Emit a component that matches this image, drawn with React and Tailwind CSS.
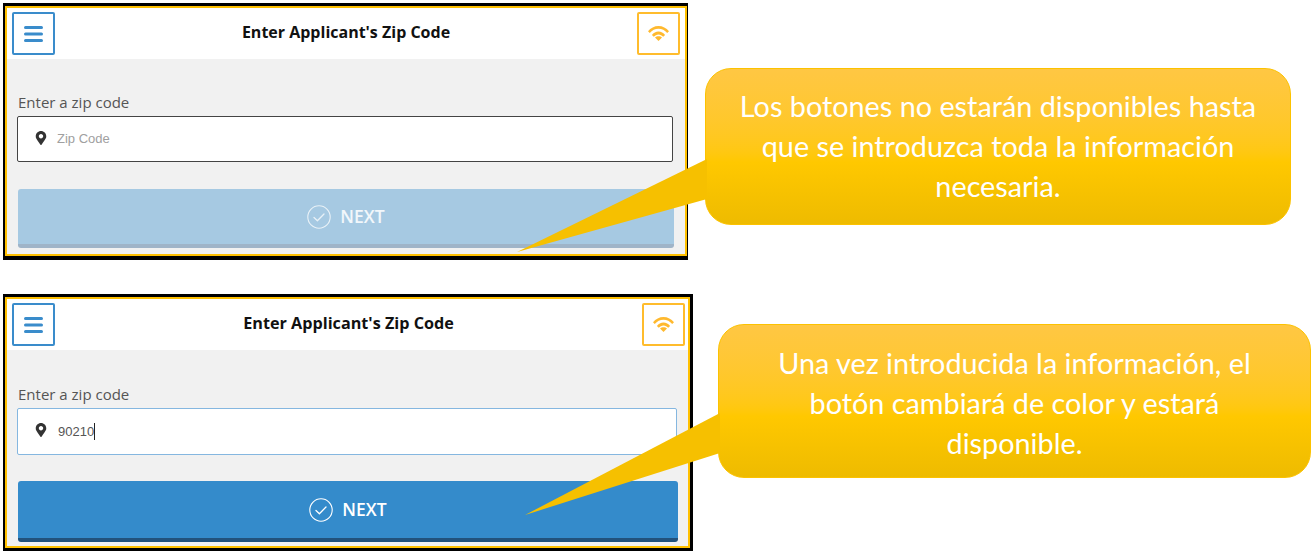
import React from "react";
import { FaMapMarkerAlt } from "react-icons/fa";

const OPEN_SANS = "font-['Open_Sans',sans-serif]";

const MenuIcon = () => (
  <svg width="19" height="16" viewBox="0 0 19 16" fill="#3a8ccb">
    <rect x="0" y="0" width="19" height="3" rx="1.5" />
    <rect x="0" y="6.5" width="19" height="3" rx="1.5" />
    <rect x="0" y="13" width="19" height="3" rx="1.5" />
  </svg>
);

const WifiIcon = () => (
  <svg width="21" height="15" viewBox="0 0 21 15" fill="#ffb92e">
    <path d="M0 5.2C2.7 2 6.4 0 10.5 0S18.300 2 21 5.200L19.200 7C16.900 4.300 13.900 2.800 10.500 2.800S4.100 4.300 1.800 7z" />
    <path d="M3.900 9C5.500 6.900 7.900 5.600 10.500 5.600S15.500 6.900 17.100 9L15.200 10.800C14 9.300 12.300 8.400 10.500 8.400S7 9.300 5.800 10.800z" />
    <path d="M7 11.600C7.900 10.700 9.100 10.200 10.500 10.200S13.100 10.700 14 11.600L10.500 15z" />
  </svg>
);

const CheckCircle = ({ opacity }) => (
  <svg width="24" height="24" viewBox="0 0 24 24" fill="none" stroke="#fff" opacity={opacity}>
    <circle cx="12" cy="12" r="11.2" strokeWidth="1.1" />
    <path d="M7 12.5l3.4 3.2L17 9" strokeWidth="1.3" strokeLinecap="round" strokeLinejoin="round" />
  </svg>
);

const AppPanel = ({ filled }) => (
  <div
    className={`h-[257px] shrink-0 border-t-[3px] border-l-2 border-black ${
      filled ? "w-[690px] border-r-[3px] border-b-[3px]" : "w-[685px] border-r-[1px] border-b-4"
    }`}
  >
    <div className="flex h-full flex-col border-2 border-[#ffc000] bg-[#f1f1f1]">
      <div
        className={`flex h-[51px] shrink-0 items-start justify-between bg-white pl-[5px] pt-[4px] ${
          filled ? "pr-[3px]" : "pr-[5px]"
        }`}
      >
        <div className="flex h-[43px] w-[43px] items-center justify-center rounded-[2px] border-2 border-[#3a8ccb]">
          <MenuIcon />
        </div>
        <h1
          className={`${OPEN_SANS} mt-[7px] font-bold leading-[26px] text-[#111] ${
            filled ? "text-[16.2px]" : "text-[16px]"
          }`}
        >
          Enter Applicant's Zip Code
        </h1>
        <div className="flex h-[43px] w-[43px] items-center justify-center rounded-[2px] border-2 border-[#ffbc2c]">
          <WifiIcon />
        </div>
      </div>
      <div className={`flex flex-col pl-[10px] ${filled ? "pt-[34px]" : "pt-[33px]"}`}>
        <label className={`${OPEN_SANS} ml-[1px] text-[15px] leading-[20px] text-[#555]`}>Enter a zip code</label>
        <div
          className={`mt-[4px] flex items-center rounded-[2px] border bg-white pl-[16px] ${
            filled ? "h-[47px] w-[660px] border-[#85b7e0]" : "h-[46px] w-[656px] border-[#444]"
          }`}
        >
          <FaMapMarkerAlt className="-mt-[3px] text-[14px] text-[#333]" />
          {filled ? (
            <span className="ml-[10px] flex items-center font-['Liberation_Sans',sans-serif] text-[13px] text-[#555]">
              90210
              <span className="h-[17px] w-px bg-[#222]" />
            </span>
          ) : (
            <span className="ml-[9px] font-['Liberation_Sans',sans-serif] text-[13px] text-[#a0a0a0]">Zip Code</span>
          )}
        </div>
        <div
          className={`ml-[1px] flex items-center justify-center rounded-[3px] border-b-4 ${
            filled
              ? "mt-[26px] h-[61px] w-[660px] border-[#22527c] bg-[#348bcb]"
              : "mt-[27px] h-[59px] w-[656px] border-[#9fb4c8] bg-[#a6c9e2]"
          }`}
        >
          <CheckCircle opacity={filled ? 1 : 0.75} />
          <span
            className={`${OPEN_SANS} ml-[9px] text-[17.500px] font-semibold ${
              filled ? "text-white" : "text-white/85"
            }`}
          >
            NEXT
          </span>
        </div>
      </div>
    </div>
  </div>
);

const Callout = ({ className, tail, lines }) => (
  <div
    className={`relative flex shrink-0 flex-col items-center justify-center rounded-[26px] border border-[#fcc200] bg-linear-to-b from-[#ffc743] via-[#ffc800] via-60% to-[#eebb00] font-['Lato',sans-serif] text-[28.8px] leading-[40px] text-white ${className}`}
  >
    <svg className="absolute top-0 left-0 overflow-visible" width="1" height="1">
      <polygon points={tail} fill="#f6c000" />
    </svg>
    {lines.map((line) => (
      <div key={line}>{line}</div>
    ))}
  </div>
);

export default function App() {
  return (
    <div className="h-[553px] w-[1314px] overflow-hidden bg-white pl-[3px] pt-[3px]">
      <div className="flex items-start">
        <AppPanel />
        <Callout
          className="ml-[17px] mt-[65px] h-[157px] w-[586px] pb-[2px]"
          tail="1,90 -189,183 1,130"
          lines={[
            "Los botones no estarán disponibles hasta",
            "que se introduzca toda la información",
            "necesaria.",
          ]}
        />
      </div>
      <div className="mt-[34px] flex items-start">
        <AppPanel filled />
        <Callout
          className="ml-[25px] mt-[30px] h-[154px] w-[593px] pt-[4px]"
          tail="1,88 -194,190 1,128"
          lines={[
            "Una vez introducida la información, el",
            "botón cambiará de color y estará",
            "disponible.",
          ]}
        />
      </div>
    </div>
  );
}
